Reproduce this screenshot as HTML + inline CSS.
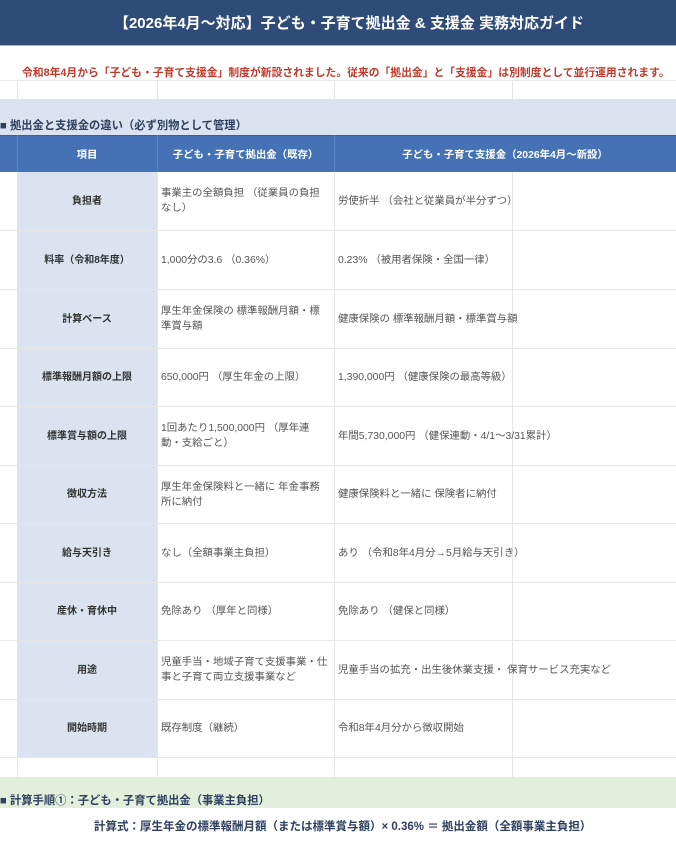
<!DOCTYPE html>
<html><head><meta charset="utf-8"><style>
*{margin:0;padding:0;box-sizing:border-box}
body{width:676px;height:844px;overflow:hidden;background:#fff;font-family:"Liberation Sans","Noto Sans CJK JP",sans-serif;position:relative}
.a{position:absolute}
.vl{position:absolute;width:1px;background:#e6e6e6}
.hl{position:absolute;height:1px;left:0;width:676px;background:#e6e6e6}
.c{position:absolute;display:flex;align-items:center;font-size:10.4px;color:#555;line-height:15px;padding:0 4px}
.k{background:#dae3ef;justify-content:center;font-weight:bold;color:#333;font-size:10px}
</style></head><body>
<div class="a" style="left:0;top:0;width:676px;height:45px;background:#2f4c78;color:#fff;font-weight:bold;font-size:15px;display:flex;align-items:center;justify-content:center;padding-left:22px">【2026年4月〜対応】子ども・子育て拠出金 &amp; 支援金 実務対応ガイド</div>
<div class="a" style="left:0;top:45px;width:676px;height:1px;background:#9fb3cf"></div>
<div class="a" style="left:22px;top:64px;font-size:10.8px;font-weight:bold;color:#c0392b;white-space:nowrap;letter-spacing:0px">令和8年4月から「子ども・子育て支援金」制度が新設されました。従来の「拠出金」と「支援金」は別制度として並行運用されます。</div>
<div class="hl" style="top:80px"></div>
<div class="vl" style="left:17px;top:80px;height:19px"></div><div class="vl" style="left:157px;top:80px;height:19px"></div><div class="vl" style="left:334px;top:80px;height:19px"></div><div class="vl" style="left:512px;top:80px;height:19px"></div>
<div class="a" style="left:0;top:99px;width:676px;height:36px;background:#dae3ef"></div>
<div class="a" style="left:0;top:117px;font-size:11.3px;font-weight:bold;color:#2f4060;white-space:nowrap">■ 拠出金と支援金の違い（必ず別物として管理）</div>
<div class="a" style="left:0;top:135px;width:676px;height:37px;background:#4472b4;border-top:1px solid #37609e"></div>
<div class="vl" style="left:17px;top:135px;height:37px;background:#5d86c2"></div><div class="vl" style="left:157px;top:135px;height:37px;background:#5d86c2"></div><div class="vl" style="left:334px;top:135px;height:37px;background:#5d86c2"></div>
<div class="a" style="left:17px;top:135px;width:140px;height:37px;display:flex;align-items:center;justify-content:center;color:#fff;font-weight:bold;font-size:10.4px">項目</div>
<div class="a" style="left:157px;top:135px;width:177px;height:37px;display:flex;align-items:center;justify-content:center;color:#fff;font-weight:bold;font-size:10.4px">子ども・子育て拠出金（既存）</div>
<div class="a" style="left:334px;top:135px;width:342px;height:37px;display:flex;align-items:center;justify-content:center;color:#fff;font-weight:bold;font-size:10.4px">子ども・子育て支援金（2026年4月〜新設）</div>
<div class="c k" style="left:17px;top:172px;width:140px;height:585px;padding:0"></div>
<div class="vl" style="left:17px;top:172px;height:605px"></div><div class="vl" style="left:157px;top:172px;height:605px"></div><div class="vl" style="left:334px;top:172px;height:605px"></div><div class="vl" style="left:512px;top:172px;height:605px"></div>
<div class="hl" style="top:230px"></div><div class="hl" style="top:289px"></div><div class="hl" style="top:348px"></div><div class="hl" style="top:406px"></div><div class="hl" style="top:465px"></div><div class="hl" style="top:523px"></div><div class="hl" style="top:582px"></div><div class="hl" style="top:640px"></div><div class="hl" style="top:699px"></div><div class="hl" style="top:757px"></div>

<div class="c k" style="left:17px;top:172px;width:140px;height:58px">負担者</div>
<div class="c" style="left:157px;top:172px;width:177px;height:58px">事業主の全額負担 （従業員の負担なし）</div>
<div class="c" style="left:334px;top:172px;width:342px;height:58px">労使折半 （会社と従業員が半分ずつ）</div>

<div class="c k" style="left:17px;top:231px;width:140px;height:58px">料率（令和8年度）</div>
<div class="c" style="left:157px;top:231px;width:177px;height:58px">1,000分の3.6 （0.36%）</div>
<div class="c" style="left:334px;top:231px;width:342px;height:58px">0.23% （被用者保険・全国一律）</div>

<div class="c k" style="left:17px;top:290px;width:140px;height:58px">計算ベース</div>
<div class="c" style="left:157px;top:290px;width:177px;height:58px">厚生年金保険の 標準報酬月額・標準賞与額</div>
<div class="c" style="left:334px;top:290px;width:342px;height:58px">健康保険の 標準報酬月額・標準賞与額</div>

<div class="c k" style="left:17px;top:349px;width:140px;height:57px">標準報酬月額の上限</div>
<div class="c" style="left:157px;top:349px;width:177px;height:57px">650,000円 （厚生年金の上限）</div>
<div class="c" style="left:334px;top:349px;width:342px;height:57px">1,390,000円 （健康保険の最高等級）</div>

<div class="c k" style="left:17px;top:407px;width:140px;height:58px">標準賞与額の上限</div>
<div class="c" style="left:157px;top:407px;width:177px;height:58px">1回あたり1,500,000円 （厚年連動・支給ごと）</div>
<div class="c" style="left:334px;top:407px;width:342px;height:58px">年間5,730,000円 （健保連動・4/1〜3/31累計）</div>

<div class="c k" style="left:17px;top:466px;width:140px;height:57px">徴収方法</div>
<div class="c" style="left:157px;top:466px;width:177px;height:57px">厚生年金保険料と一緒に 年金事務所に納付</div>
<div class="c" style="left:334px;top:466px;width:342px;height:57px">健康保険料と一緒に 保険者に納付</div>

<div class="c k" style="left:17px;top:524px;width:140px;height:58px">給与天引き</div>
<div class="c" style="left:157px;top:524px;width:177px;height:58px">なし（全額事業主負担）</div>
<div class="c" style="left:334px;top:524px;width:342px;height:58px">あり （令和8年4月分→5月給与天引き）</div>

<div class="c k" style="left:17px;top:583px;width:140px;height:57px">産休・育休中</div>
<div class="c" style="left:157px;top:583px;width:177px;height:57px">免除あり （厚年と同様）</div>
<div class="c" style="left:334px;top:583px;width:342px;height:57px">免除あり （健保と同様）</div>

<div class="c k" style="left:17px;top:641px;width:140px;height:58px">用途</div>
<div class="c" style="left:157px;top:641px;width:177px;height:58px">児童手当・地域子育て支援事業・仕事と子育て両立支援事業など</div>
<div class="c" style="left:334px;top:641px;width:342px;height:58px">児童手当の拡充・出生後休業支援・ 保育サービス充実など</div>

<div class="c k" style="left:17px;top:700px;width:140px;height:57px">開始時期</div>
<div class="c" style="left:157px;top:700px;width:177px;height:57px">既存制度（継続）</div>
<div class="c" style="left:334px;top:700px;width:342px;height:57px">令和8年4月分から徴収開始</div>

<div class="a" style="left:0;top:777px;width:676px;height:31px;background:#e2efda"></div>
<div class="a" style="left:0;top:792px;font-size:11.3px;font-weight:bold;color:#2f4060;white-space:nowrap">■ 計算手順①：子ども・子育て拠出金（事業主負担）</div>
<div class="a" style="left:94px;top:818px;font-size:11.5px;font-weight:bold;color:#2f4060;white-space:nowrap">計算式：厚生年金の標準報酬月額（または標準賞与額）× 0.36% ＝ 拠出金額（全額事業主負担）</div>
</body></html>
